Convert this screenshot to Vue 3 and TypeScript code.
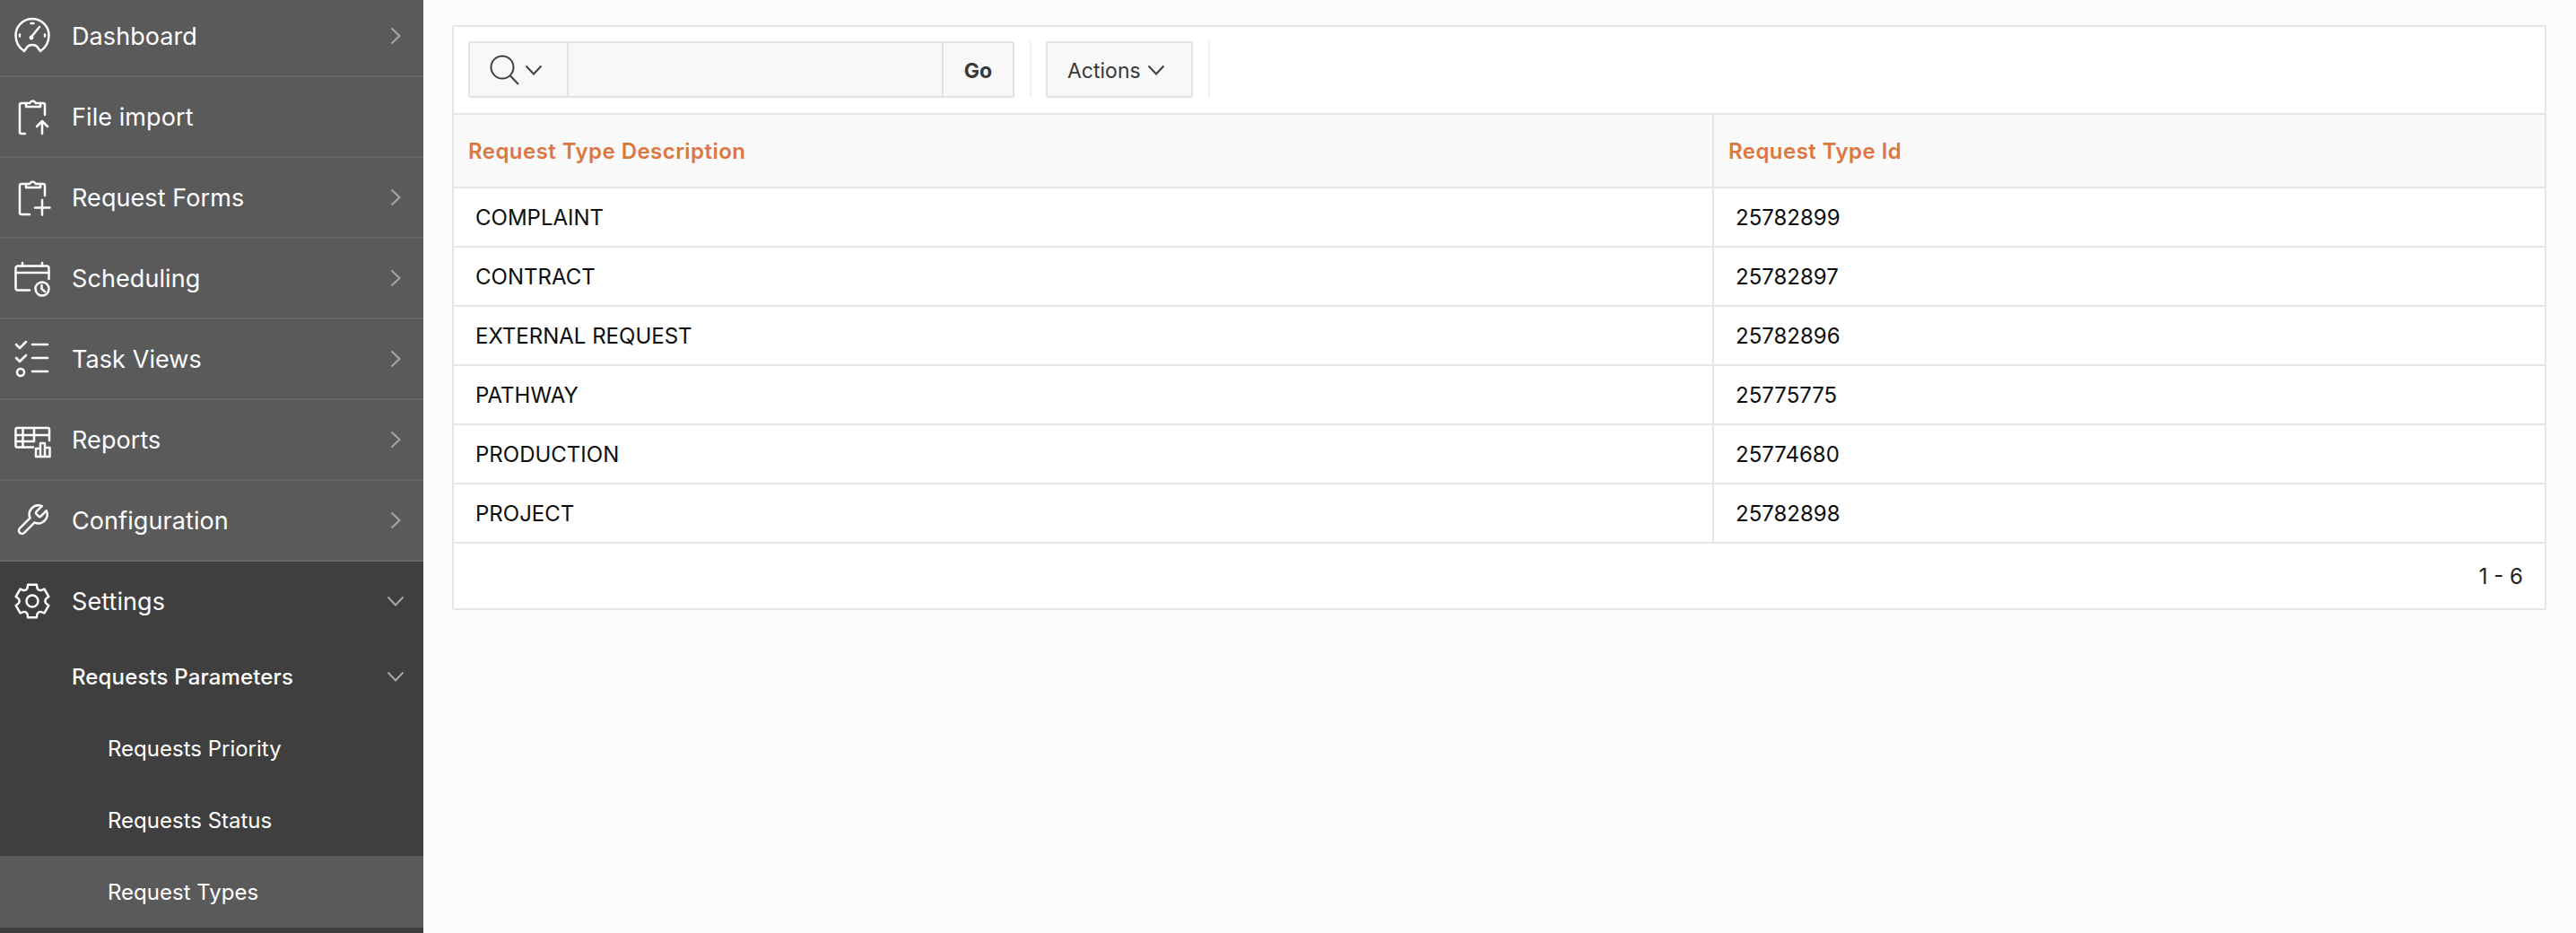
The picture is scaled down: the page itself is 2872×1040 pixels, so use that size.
<script setup lang="ts">
import { ref } from 'vue'

interface NavItem {
  name: string;
  icon: string;
  arrow: boolean;
}

interface RequestType {
  description: string;
  id: string;
}

const navItems = ref<NavItem[]>([
  { name: 'Dashboard', icon: 'gauge', arrow: true },
  { name: 'File import', icon: 'upload', arrow: false },
  { name: 'Request Forms', icon: 'form', arrow: true },
  { name: 'Scheduling', icon: 'calendar', arrow: true },
  { name: 'Task Views', icon: 'tasks', arrow: true },
  { name: 'Reports', icon: 'reports', arrow: true },
  { name: 'Configuration', icon: 'wrench', arrow: true }
])

const subItems = ref<string[]>(['Requests Priority', 'Requests Status', 'Request Types'])
const selectedSubItem = ref('Request Types')

const rows = ref<RequestType[]>([
  { description: 'COMPLAINT', id: '25782899' },
  { description: 'CONTRACT', id: '25782897' },
  { description: 'EXTERNAL REQUEST', id: '25782896' },
  { description: 'PATHWAY', id: '25775775' },
  { description: 'PRODUCTION', id: '25774680' },
  { description: 'PROJECT', id: '25782898' }
])

const polar = (deg: number, r: number) => {
  const rad = (deg * Math.PI) / 180
  return `${(20 + r * Math.cos(rad)).toFixed(2)} ${(20 + r * Math.sin(rad)).toFixed(2)}`
}

// six flat topped teeth with rounded valleys
const gearPath = (() => {
  let d = `M${polar(-120, 14.5)}`
  for (let i = 0; i < 6; i++) {
    const a = i * 60 - 90
    d += ` Q${polar(a - 22, 14)} ${polar(a - 15, 19)}`
    d += ` L${polar(a + 15, 19)}`
    d += ` Q${polar(a + 22, 14)} ${polar(a + 30, 14.5)}`
  }
  return d + ' Z'
})()
</script>

<template>
  <div class="page">
    <aside class="sidebar">
      <div v-for="item in navItems" :key="item.name" class="nav-row">
        <svg class="nav-icon" viewBox="0 0 40 40">
          <template v-if="item.icon === 'gauge'">
            <path d="M11 37 C5 33 1.5 27 1.5 19.5 A18.5 18.5 0 0 1 38.5 19.5 C38.5 27 35 33 29 37 L26.5 33.5 C25 31 22 30 20 30 C18 30 15 31 13.5 33.5 Z" />
            <path d="M19 21 L28 10 M18.5 6 H21.5 M6 18.5 V20.5 M34 18.5 V20.5" />
            <circle cx="19" cy="22" r="1.2" class="dot" />
          </template>
          <template v-else-if="item.icon === 'upload'">
            <path d="M13 5 H8 a2 2 0 0 0 -2 2 V37 a2 2 0 0 0 2 2 H12 M29 5 H32 a2 2 0 0 1 2 2 V18" />
            <path d="M13 5 H17 Q20.5 0 24 5 H29 V9 H13 Z" />
            <path d="M31 39 V25 M25 31 L31 25 L37 31" />
          </template>
          <template v-else-if="item.icon === 'form'">
            <path d="M13 5 H8 a2 2 0 0 0 -2 2 V37 a2 2 0 0 0 2 2 H17 M29 5 H32 a2 2 0 0 1 2 2 V18" />
            <path d="M13 5 H17 Q20.5 0 24 5 H29 V9 H13 Z" />
            <path d="M31 23 V39.5 M23 31.5 H39.5" />
          </template>
          <template v-else-if="item.icon === 'calendar'">
            <path d="M17 33.5 H4 a2.5 2.5 0 0 1 -2.5 -2.5 V9 a2.5 2.5 0 0 1 2.5 -2.5 H36 a2.5 2.5 0 0 1 2.5 2.5 V21" />
            <path d="M1.5 14 H38.5 M9 3 V6.5 M31 3 V6.5" />
            <circle cx="31" cy="32" r="7.5" />
            <path d="M30.5 28 V32 L34 35" />
          </template>
          <template v-else-if="item.icon === 'tasks'">
            <path d="M2 4 L6 8 L13 1 M2 19 L6 23 L13 16 M20 4 H37 M20 19 H37 M20 34 H37" />
            <circle cx="7" cy="35" r="4" />
          </template>
          <template v-else-if="item.icon === 'reports'">
            <path d="M21 28.5 H3 a1.5 1.5 0 0 1 -1.5 -1.5 V8.5 a1.5 1.5 0 0 1 1.5 -1.5 H37.5 a1.5 1.5 0 0 1 1.5 1.5 V21" />
            <path d="M1.5 15 H39 M1.5 22 H22 M9.5 7 V28.5 M22 7 V22" />
            <path d="M24 39 V30 H29 V24 H34 V29 H39.5 V39 Z M29 30 V39 M34 29 V39" />
          </template>
          <path
            v-else
            d="M24.5 10.5a1.67 1.67 0 0 0 0 2.33l2.67 2.67a1.67 1.67 0 0 0 2.33 0l6.28-6.28a10 10 0 0 1-13.23 13.23l-11.52 11.52a3.53 3.53 0 0 1-5-5l11.52-11.52a10 10 0 0 1 13.23-13.23l-6.27 6.27z"
          />
        </svg>
        <span class="nav-text">{{ item.name }}</span>
        <svg v-if="item.arrow" class="arrow" viewBox="0 0 12 20"><path d="M1.5 1.5 L10.5 10 L1.5 18.5" /></svg>
      </div>

      <div class="settings">
        <div class="settings-row">
          <svg class="nav-icon" viewBox="0 0 40 40">
            <path :d="gearPath" />
            <circle cx="20" cy="20" r="6.5" />
          </svg>
          <span class="nav-text">Settings</span>
          <svg class="arrow-down" viewBox="0 0 20 12"><path d="M1.5 1.5 L10 10.5 L18.5 1.5" /></svg>
        </div>
        <div class="group-row">
          <span class="group-text">Requests Parameters</span>
          <svg class="arrow-down" viewBox="0 0 20 12"><path d="M1.5 1.5 L10 10.5 L18.5 1.5" /></svg>
        </div>
        <div
          v-for="sub in subItems"
          :key="sub"
          class="sub-row"
          :class="{ selected: sub === selectedSubItem }"
        >{{ sub }}</div>
      </div>
    </aside>

    <main class="main">
      <div class="card">
        <div class="toolbar">
          <div class="search-group">
            <div class="search-btn">
              <svg class="search-icon" viewBox="0 0 34 34">
                <circle cx="14" cy="14" r="12.5" />
                <path d="M23 23.5 L32 33" />
              </svg>
              <svg class="chevron" viewBox="0 0 20 12"><path d="M1.5 1.5 L10 10.5 L18.5 1.5" /></svg>
            </div>
            <div class="search-input"></div>
            <div class="go-btn">Go</div>
          </div>
          <div class="tool-sep"></div>
          <div class="actions-btn">
            Actions
            <svg class="chevron" viewBox="0 0 20 12"><path d="M1.5 1.5 L10 10.5 L18.5 1.5" /></svg>
          </div>
          <div class="tool-sep"></div>
        </div>

        <table class="report">
          <colgroup>
            <col class="col-first" />
            <col />
          </colgroup>
          <thead>
            <tr>
              <th>Request Type Description</th>
              <th>Request Type Id</th>
            </tr>
          </thead>
          <tbody>
            <tr v-for="row in rows" :key="row.id">
              <td>{{ row.description }}</td>
              <td>{{ row.id }}</td>
            </tr>
          </tbody>
        </table>

        <div class="pager">1 - 6</div>
      </div>
    </main>
  </div>
</template>

<style scoped>
.page {
  display: flex;
  height: 1040px;
  overflow: hidden;
  font-family: Inter, "Noto Sans", sans-serif;
  background: #fcfcfc;
}

/* sidebar, scrolled a few px */
.sidebar {
  width: 472px;
  flex: none;
  margin-top: -4px;
  background: #3f3f3f;
  height: 1044px;
  color: #fff;
}

.nav-row {
  display: flex;
  align-items: center;
  height: 88px;
  background: #5a5a5a;
  border-bottom: 2px solid #676767;
  padding-left: 16px;
}

.nav-icon {
  width: 40px;
  height: 40px;
  flex: none;
  fill: none;
  overflow: visible;
  stroke: #fff;
  stroke-width: 2.5;
  stroke-linecap: round;
  stroke-linejoin: round;
}

.nav-icon .dot {
  fill: #fff;
}

.nav-text {
  margin-left: 24px;
  font-size: 27px;
  letter-spacing: 0.08px;
  color: #fff;
}

.arrow {
  width: 12px;
  height: 20px;
  margin-left: auto;
  margin-right: 25px;
  fill: none;
  stroke: #a6a6a6;
  stroke-width: 2;
}

.arrow-down {
  width: 20px;
  height: 12px;
  margin-left: auto;
  margin-right: 21px;
  fill: none;
  stroke: #a6a6a6;
  stroke-width: 2;
}

.settings {
  background: #3f3f3f;
}

.settings-row {
  display: flex;
  align-items: center;
  height: 88px;
  padding-left: 16px;
}

.group-row {
  display: flex;
  align-items: center;
  height: 80px;
  padding-left: 80px;
}

.group-text {
  font-size: 24px;
  font-weight: 500;
  letter-spacing: 0.15px;
  color: #fff;
}

.sub-row {
  display: flex;
  align-items: center;
  height: 80px;
  padding-left: 120px;
  font-size: 24px;
  color: #fff;
}

.sub-row.selected {
  background: #5a5a5a;
}

.main {
  flex: 1;
  min-width: 0;
  padding: 28px 33px 0 32px;
}

.card {
  background: #fff;
  border: 2px solid #e6e6e6;
  border-radius: 2px;
}

.toolbar {
  display: flex;
  gap: 17px;
  height: 63px;
  padding: 16px;
  padding-bottom: 17px;
  border-bottom: 2px solid #e6e6e6;
}

.search-group {
  display: flex;
  width: 609px;
  background: #f8f8f8;
  border: 2px solid #e2e2e2;
  border-radius: 3px;
  box-sizing: border-box;
}

.search-btn {
  display: flex;
  align-items: center;
  width: 110px;
  flex: none;
  padding-left: 22px;
  box-sizing: border-box;
  border-right: 2px solid #e2e2e2;
}

.search-icon {
  width: 34px;
  height: 34px;
  fill: none;
  stroke: #404040;
  stroke-width: 2;
}

.chevron {
  width: 20px;
  height: 12px;
  margin-left: 5px;
  fill: none;
  stroke: #404040;
  stroke-width: 2;
}

.search-input {
  flex: 1;
}

.go-btn {
  display: flex;
  align-items: center;
  justify-content: center;
  width: 79px;
  flex: none;
  border-left: 2px solid #e2e2e2;
  box-sizing: border-box;
  font-size: 23px;
  font-weight: 700;
  color: #383838;
  padding-top: 2px;
}

.tool-sep {
  width: 2px;
  background: #f0f0f0;
}

.tool-sep + .actions-btn {
  margin-left: -1px;
}

.actions-btn {
  display: flex;
  align-items: center;
  width: 164px;
  box-sizing: border-box;
  padding-left: 22px;
  padding-top: 2px;
  background: #f8f8f8;
  border: 2px solid #e2e2e2;
  border-radius: 3px;
  font-size: 23px;
  color: #383838;
}

.actions-btn .chevron {
  margin-top: -2px;
  margin-left: 7px;
}

.report {
  width: 100%;
  table-layout: fixed;
  border-collapse: collapse;
}

.col-first {
  width: 1404px;
}

.report th {
  height: 80px;
  padding: 0 0 0 16px;
  background: #fafafa;
  color: #dc7742;
  font-size: 24px;
  font-weight: 600;
  letter-spacing: 0.45px;
  text-align: left;
  border-bottom: 2px solid #e6e6e6;
}

.report td {
  height: 64px;
  padding: 0 0 0 24px;
  font-size: 24px;
  color: #0d0d0d;
  border-bottom: 2px solid #e6e6e6;
}

.report th + th,
.report td + td {
  border-left: 2px solid #e6e6e6;
}

.pager {
  display: flex;
  align-items: center;
  justify-content: flex-end;
  height: 72px;
  padding-right: 24px;
  font-size: 24px;
  color: #222;
}
</style>

<style>
body {
  overflow: hidden;
}
</style>
